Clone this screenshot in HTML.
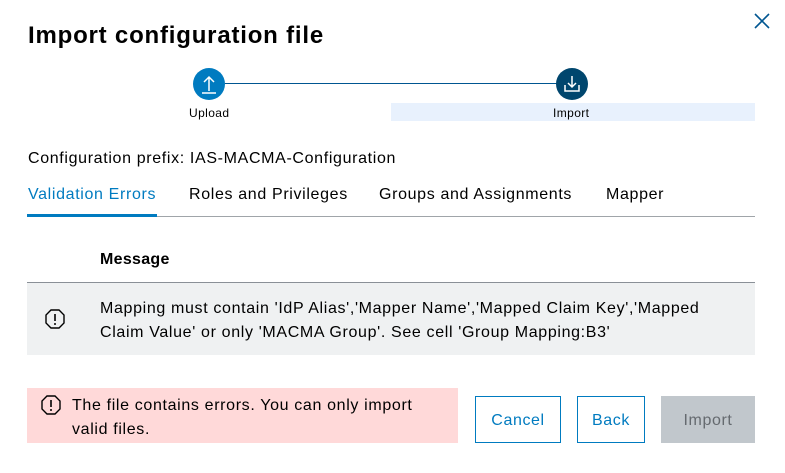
<!DOCTYPE html>
<html><head><style>
body{margin:0;width:785px;height:473px;background:#fff;font-family:"Liberation Sans",sans-serif;color:#000;position:relative;overflow:hidden}
.a{position:absolute;white-space:nowrap}
.t{font-size:16px;letter-spacing:0.65px}
.btn{position:absolute;top:396px;height:47px;box-sizing:border-box;border:1px solid #007bc0;color:#007bc0;font-size:16px;letter-spacing:0.6px;display:flex;align-items:center;justify-content:center;padding-top:2px}
</style></head><body>
<svg class="a" style="left:752px;top:11px" width="20" height="20"><path d="M3 3L17 17M17 3L3 17" stroke="#005691" stroke-width="1.6"/></svg>
<div class="a" style="left:28px;top:22px;font-size:24px;font-weight:bold;letter-spacing:0.8px">Import configuration file</div>
<div class="a" style="left:391px;top:103px;width:364px;height:18px;background:#e8f1fd"></div>
<div class="a" style="left:225px;top:83px;width:332px;height:1px;background:#005691"></div>
<svg class="a" style="left:193px;top:68px" width="32" height="32"><circle cx="16" cy="16" r="16" fill="#007bc0"/><path d="M16 23V10M11 14L16 9L21 14M9 25H23" stroke="#fff" stroke-width="1.5" fill="none"/></svg>
<svg class="a" style="left:556px;top:68px" width="32" height="32"><circle cx="16" cy="16" r="16" fill="#00466e"/><path d="M16 8V19M12 15L16 19L20 15M9 17V23H23V17" stroke="#fff" stroke-width="1.5" fill="none"/></svg>
<div class="a" style="left:189px;top:106px;font-size:12px;letter-spacing:0.4px">Upload</div>
<div class="a" style="left:553px;top:106px;font-size:12px;letter-spacing:0.4px">Import</div>
<div class="a t" style="left:28px;top:150px">Configuration prefix: IAS-MACMA-Configuration</div>
<div class="a t" style="left:28px;top:186px;color:#007bc0">Validation Errors</div>
<div class="a t" style="left:189px;top:186px">Roles and Privileges</div>
<div class="a t" style="left:379px;top:186px">Groups and Assignments</div>
<div class="a t" style="left:606px;top:186px">Mapper</div>
<div class="a" style="left:27px;top:216px;width:728px;height:1px;background:#a0a5a9"></div>
<div class="a" style="left:27px;top:214px;width:130px;height:3px;background:#007bc0"></div>
<div class="a t" style="left:100px;top:251px;font-weight:bold;letter-spacing:0.3px">Message</div>
<div class="a" style="left:27px;top:282px;width:728px;height:72px;background:#eff1f2;border-top:1px solid #8a9097"></div>
<svg class="a" style="left:44px;top:308px" width="22" height="22"><path d="M7 2H15L20 7V15L15 20H7L2 15V7Z" stroke="#000" stroke-width="1.4" fill="none"/><path d="M11 6V13" stroke="#000" stroke-width="1.6"/><circle cx="11" cy="16" r="1" fill="#000"/></svg>
<div class="a t" style="left:100px;top:297px;line-height:24px">Mapping must contain 'IdP Alias','Mapper Name','Mapped Claim Key','Mapped<br>Claim Value' or only 'MACMA Group'. See cell 'Group Mapping:B3'</div>
<div class="a" style="left:27px;top:388px;width:431px;height:55px;background:#ffd9d9"></div>
<svg class="a" style="left:40px;top:394px" width="22" height="22"><path d="M7 2H15L20 7V15L15 20H7L2 15V7Z" stroke="#000" stroke-width="1.4" fill="none"/><path d="M11 6V13" stroke="#000" stroke-width="1.6"/><circle cx="11" cy="16" r="1" fill="#000"/></svg>
<div class="a t" style="left:72px;top:394px;line-height:24px">The file contains errors. You can only import<br>valid files.</div>
<div class="btn" style="left:475px;width:86px">Cancel</div>
<div class="btn" style="left:577px;width:68px">Back</div>
<div class="btn" style="left:661px;width:94px;background:#c1c7cc;border-color:#c1c7cc;color:#656a6f">Import</div>
</body></html>
